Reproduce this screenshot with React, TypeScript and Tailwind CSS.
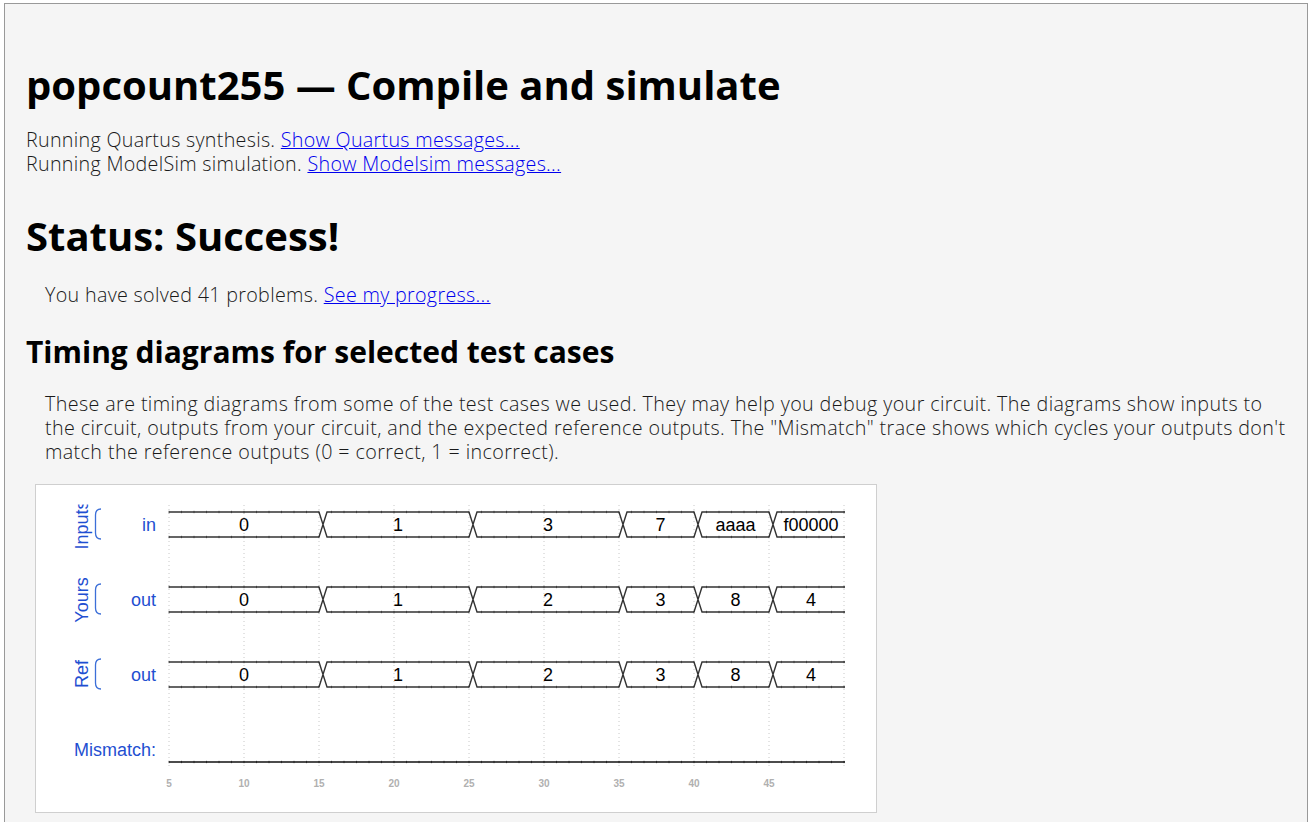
import React from "react";

const X0 = 170;
const U = 15;
const XEND = 846;
const tx = (t: number) => X0 + (t - 5) * U;
const FONT = "'Liberation Sans', Arial, sans-serif";

type Seg = { t0: number; t1: number; v: string };

function Bus({ top, segs }: { top: number; segs: Seg[] }) {
  const bot = top + 25;
  const mid = top + 12.5;
  const parts: React.ReactNode[] = [];
  segs.forEach((s, i) => {
    const a = i === 0 ? tx(s.t0) : tx(s.t0) + 8;
    const b = s.t1 >= 50 ? XEND : tx(s.t1);
    let d = "";
    if (i === 0) {
      d += `M ${a} ${top} L ${b} ${top}`;
      d += ` M ${a} ${bot} L ${b} ${bot}`;
    } else {
      d += `M ${a - 8} ${bot} L ${a} ${top} L ${b} ${top}`;
      d += ` M ${a - 8} ${top} L ${a} ${bot} L ${b} ${bot}`;
    }
    parts.push(
      <path key={"p" + i} d={d} fill="none" stroke="#333" strokeWidth={1.4} />
    );
    parts.push(
      <text
        key={"t" + i}
        x={(a + b) / 2}
        y={mid + 6.5}
        textAnchor="middle"
        fontSize={18}
        fill="#000"
        fontFamily={FONT}
      >
        {s.v}
      </text>
    );
  });
  const ticks: React.ReactNode[] = [];
  for (let x = X0; x <= XEND; x += 12.5) {
    ticks.push(
      <g key={"k" + x}>
        <line x1={x} x2={x} y1={top - 1.2} y2={top + 1.2} stroke="#666" strokeWidth={1} />
        <line x1={x} x2={x} y1={bot - 1.2} y2={bot + 1.2} stroke="#666" strokeWidth={1} />
      </g>
    );
  }
  return (
    <g>
      {ticks}
      {parts}
    </g>
  );
}

function Bracket({ y }: { y: number }) {
  return (
    <path
      d={`M 102 ${y} Q 96.5 ${y} 96.5 ${y + 6} L 96.5 ${y + 24} Q 96.5 ${y + 30} 102 ${y + 30}`}
      fill="none"
      stroke="#3c6fd8"
      strokeWidth={1.3}
    />
  );
}

function Diagram() {
  const blue = "#1f4fd1";
  const grid: React.ReactNode[] = [];
  for (let k = 0; k <= 9; k++) {
    const x = X0 + 75 * k;
    grid.push(
      <line
        key={"g" + k}
        x1={x}
        x2={x}
        y1={505}
        y2={768}
        stroke="#c8c8c8"
        strokeWidth={1}
        strokeDasharray="1 3"
      />
    );
  }
  const axis: React.ReactNode[] = [];
  for (let k = 0; k <= 8; k++) {
    axis.push(
      <text
        key={"a" + k}
        x={X0 + 75 * k}
        y={787}
        textAnchor="middle"
        fontSize={10}
        fontWeight={700}
        fill="#b0b0b0"
        fontFamily={FONT}
      >
        {5 + 5 * k}
      </text>
    );
  }
  const mismatchTicks: React.ReactNode[] = [];
  for (let x = X0; x <= XEND; x += 12.5) {
    mismatchTicks.push(
      <line key={"m" + x} x1={x} x2={x} y1={760.8} y2={763.2} stroke="#666" strokeWidth={1} />
    );
  }
  return (
    <svg width={840} height={327} viewBox="37 485 840 327" className="block">
      <defs>
        <clipPath id="lblclip">
          <rect x={37} y={504.5} width={120} height={300} />
        </clipPath>
      </defs>
      {grid}
      <Bus
        top={512}
        segs={[
          { t0: 5, t1: 15, v: "0" },
          { t0: 15, t1: 25, v: "1" },
          { t0: 25, t1: 35, v: "3" },
          { t0: 35, t1: 40, v: "7" },
          { t0: 40, t1: 45, v: "aaaa" },
          { t0: 45, t1: 50, v: "f00000" },
        ]}
      />
      <Bus
        top={587}
        segs={[
          { t0: 5, t1: 15, v: "0" },
          { t0: 15, t1: 25, v: "1" },
          { t0: 25, t1: 35, v: "2" },
          { t0: 35, t1: 40, v: "3" },
          { t0: 40, t1: 45, v: "8" },
          { t0: 45, t1: 50, v: "4" },
        ]}
      />
      <Bus
        top={662}
        segs={[
          { t0: 5, t1: 15, v: "0" },
          { t0: 15, t1: 25, v: "1" },
          { t0: 25, t1: 35, v: "2" },
          { t0: 35, t1: 40, v: "3" },
          { t0: 40, t1: 45, v: "8" },
          { t0: 45, t1: 50, v: "4" },
        ]}
      />
      {mismatchTicks}
      <line x1={X0} x2={XEND} y1={762} y2={762} stroke="#111" strokeWidth={1.4} />
      {axis}

      <g fill={blue} fontFamily={FONT} fontSize={18}>
        <text x={157} y={531} textAnchor="end">in</text>
        <text x={157} y={606} textAnchor="end">out</text>
        <text x={157} y={681} textAnchor="end">out</text>
        <text x={157} y={756} textAnchor="end">Mismatch:</text>
      </g>
      <g fill={blue} fontFamily={FONT} fontSize={18} clipPath="url(#lblclip)">
        <text x={89} y={525} textAnchor="middle" transform="rotate(-90 89 525)">Inputs</text>
        <text x={89} y={600} textAnchor="middle" transform="rotate(-90 89 600)">Yours</text>
        <text x={89} y={674} textAnchor="middle" transform="rotate(-90 89 674)">Ref</text>
      </g>
      <Bracket y={509} />
      <Bracket y={584} />
      <Bracket y={659} />
    </svg>
  );
}

export default function App() {
  const body = { fontFamily: "'Open Sans', sans-serif" };
  const head = { fontFamily: "'Open Sans', sans-serif" };
  return (
    <div className="min-h-screen bg-white pt-[3px] pl-[4px] pr-[6px]">
      <div className="border border-[#999] bg-[#f5f5f5] pl-[21px] pb-[40px] text-[#1a1a1a] font-light" style={body}>
        <h1 className="mt-[57px] text-[40px] leading-[48px] font-bold text-black" style={head}>
          popcount255 — Compile and simulate
        </h1>
        <div className="mt-[19px] text-[19.7px] leading-[24px] tracking-[0.3px]">
          <div>
            Running Quartus synthesis.{" "}
            <a href="#" className="text-[#0000ee] underline">Show Quartus messages...</a>
          </div>
          <div>
            Running ModelSim simulation.{" "}
            <a href="#" className="text-[#0000ee] underline">Show Modelsim messages...</a>
          </div>
        </div>
        <h2 className="mt-[36px] text-[40px] leading-[48px] font-bold text-black" style={head}>
          Status: Success!
        </h2>
        <div className="mt-[23px] ml-[19px] text-[19.7px] leading-[24px] tracking-[0.32px]">
          You have solved 41 problems.{" "}
          <a href="#" className="text-[#0000ee] underline">See my progress...</a>
        </div>
        <h3 className="mt-[27px] text-[30px] leading-[36px] font-bold text-black" style={head}>
          Timing diagrams for selected test cases
        </h3>
        <p className="mt-[22px] ml-[19px] text-[19.7px] leading-[24px] tracking-[0.4px] whitespace-nowrap">
          These are timing diagrams from some of the test cases we used. They may help you debug your circuit. The diagrams show inputs to
          <br />
          the circuit, outputs from your circuit, and the expected reference outputs. The "Mismatch" trace shows which cycles your outputs don't
          <br />
          match the reference outputs (0 = correct, 1 = incorrect).
        </p>
        <div className="mt-[20px] ml-[9px] w-[842px] border border-[#cfcfcf] bg-white">
          <Diagram />
        </div>
      </div>
    </div>
  );
}
